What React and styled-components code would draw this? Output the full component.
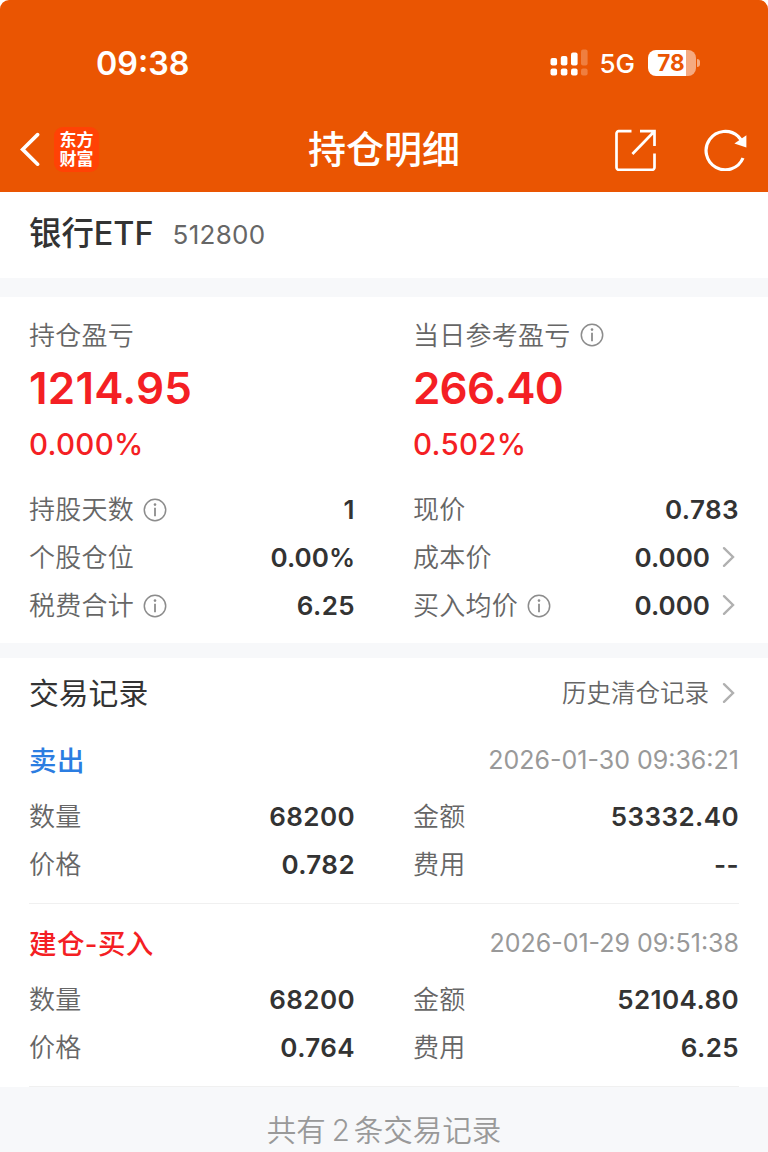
import styled, { createGlobalStyle } from "styled-components";

export default function App() {
  return (
    <>
      <GlobalStyle />
      <SPage>
        <SHeader>
          <SStatusBar>
            <STime>09:38</STime>
            <SStatusIcons>
              <SignalIcon />
              <SNetwork>5G</SNetwork>
              <SBattery>
                <span>78</span>
              </SBattery>
              <SBatteryTip />
            </SStatusIcons>
          </SStatusBar>
          <SNavBar>
            <SNavSide>
              <BackIcon />
              <SBrand>
                <span>东方</span>
                <span>财富</span>
              </SBrand>
            </SNavSide>
            <STitle>持仓明细</STitle>
            <SNavSide $end>
              <ShareIcon />
              <RefreshIcon />
            </SNavSide>
          </SNavBar>
        </SHeader>

        <SStock>
          <SStockName>银行ETF</SStockName>
          <SStockCode>512800</SStockCode>
        </SStock>

        <SSummary>
          <SColumns>
            {profits.map((p) => (
              <SProfit key={p.label}>
                <SLabel>
                  <span>{p.label}</span>
                  {p.info && <InfoIcon />}
                </SLabel>
                <SAmount $tracking={p.tracking}>{p.amount}</SAmount>
                <SPercent>{p.percent}</SPercent>
              </SProfit>
            ))}
          </SColumns>
          <SDetails>
            {details.map((d) => (
              <Field key={d.label} {...d} />
            ))}
          </SDetails>
        </SSummary>

        <SRecords>
          <SRecordsHead>
            <h2>交易记录</h2>
            <SHistory>
              <span>历史清仓记录</span>
              <ChevronIcon />
            </SHistory>
          </SRecordsHead>
          {trades.map((t) => (
            <STrade key={t.time}>
              <STradeHead>
                <STradeType $color={t.color}>{t.type}</STradeType>
                <STradeTime>{t.time}</STradeTime>
              </STradeHead>
              <SColumns>
                {t.fields.map((f) => (
                  <Field key={f.label} {...f} />
                ))}
              </SColumns>
            </STrade>
          ))}
        </SRecords>

        <SFooter>
          共有<b>2</b>条交易记录
        </SFooter>
      </SPage>
    </>
  );
}

const profits = [
  { label: "持仓盈亏", amount: "1214.95", percent: "0.000%", tracking: "0.2px" },
  {
    label: "当日参考盈亏",
    amount: "266.40",
    percent: "0.502%",
    info: true,
    tracking: "-0.8px",
  },
];

const details = [
  { label: "持股天数", value: "1", info: true },
  { label: "现价", value: "0.783" },
  { label: "个股仓位", value: "0.00%", tight: true },
  { label: "成本价", value: "0.000", link: true, tight: true },
  { label: "税费合计", value: "6.25", info: true },
  { label: "买入均价", value: "0.000", info: true, link: true, tight: true },
];

const trades = [
  {
    type: "卖出",
    color: "#2b7de1",
    time: "2026-01-30 09:36:21",
    fields: [
      { label: "数量", value: "68200" },
      { label: "金额", value: "53332.40" },
      { label: "价格", value: "0.782" },
      { label: "费用", value: "--" },
    ],
  },
  {
    type: "建仓-买入",
    color: "#f41f24",
    time: "2026-01-29 09:51:38",
    fields: [
      { label: "数量", value: "68200" },
      { label: "金额", value: "52104.80" },
      { label: "价格", value: "0.764" },
      { label: "费用", value: "6.25" },
    ],
  },
];

function Field({ label, value, info, link, tight }) {
  return (
    <SField>
      <SLabel>
        {label}
        {info && <InfoIcon />}
      </SLabel>
      <SValue $tight={tight}>
        <span>{value}</span>
        {link && <ChevronIcon />}
      </SValue>
    </SField>
  );
}

function SignalIcon() {
  return (
    <svg width="38" height="28" viewBox="0 0 38 28" fill="#fff">
      <rect x="0.5" y="9" width="6.6" height="7.6" rx="2" />
      <rect x="10.8" y="7" width="6.6" height="9.6" rx="2" />
      <rect x="21" y="3.6" width="6.6" height="13" rx="2" />
      <rect x="0.5" y="19.6" width="6.6" height="7" rx="2" />
      <rect x="10.8" y="19.6" width="6.6" height="7" rx="2" />
      <rect x="21" y="19.6" width="6.6" height="7" rx="2" />
      <g opacity="0.24">
        <rect x="31" y="0.6" width="6.6" height="16" rx="2" />
        <rect x="31" y="19.6" width="6.6" height="7" rx="2" />
      </g>
    </svg>
  );
}

function BackIcon() {
  return (
    <svg width="20" height="34" viewBox="0 0 20 34" fill="none">
      <path
        d="M17.6 2.6 2.6 17.4l15 14.8"
        stroke="#fff"
        strokeWidth="3.6"
        strokeLinecap="round"
      />
    </svg>
  );
}

function ShareIcon() {
  return (
    <svg width="42" height="42" viewBox="0 0 42 42" fill="none">
      <path
        d="M16.5 2.2H3.7a2.2 2.2 0 0 0-2.2 2.2v34.2a2.2 2.2 0 0 0 2.2 2.2h33.6a2.2 2.2 0 0 0 2.2-2.2V24.6M25 2.2h14.5v14.8M39 2.7 17.4 25"
        stroke="#fff"
        strokeWidth="2.7"
      />
    </svg>
  );
}

function RefreshIcon() {
  return (
    <svg width="44" height="42" viewBox="0 0 44 42" fill="none">
      <path
        d="M39 29A19.2 19.2 0 1 1 34.2 7.4L37.6 11.5"
        stroke="#fff"
        strokeWidth="3.2"
      />
      <path d="M42.4 6.2V18.4L30.4 14.4Z" fill="#fff" />
    </svg>
  );
}

function InfoIcon() {
  return (
    <svg width="24" height="24" viewBox="0 0 24 24" fill="none">
      <circle cx="12" cy="12" r="10.7" stroke="#8c8c8c" strokeWidth="1.5" />
      <path d="M12 9.7v8.6" stroke="#8c8c8c" strokeWidth="1.8" />
      <circle cx="12" cy="6.6" r="1.3" fill="#8c8c8c" />
    </svg>
  );
}

function ChevronIcon() {
  return (
    <svg width="14" height="22" viewBox="0 0 14 22" fill="none">
      <path
        d="M2 2.2 11 11l-9 8.8"
        stroke="#b0b0b0"
        strokeWidth="2.4"
        strokeLinecap="round"
      />
    </svg>
  );
}

const GlobalStyle = createGlobalStyle`
  * {
    box-sizing: border-box;
    margin: 0;
  }

  body {
    background: #fff;
    color: #333;
    font-family: Inter, "Noto Sans CJK SC", sans-serif;
  }

  svg {
    display: block;
    flex-shrink: 0;
  }
`;

const SPage = styled.div`
  display: flex;
  flex-direction: column;
  width: 768px;
  height: 1152px;
  overflow: hidden;
  background: #f7f8fa;
`;

const SHeader = styled.header`
  height: 192px;
  border-radius: 9px 9px 0 0;
  background: #ea5502;
  box-shadow: 0 -12px 0 12px #fff;
  clip-path: inset(0);
  color: #fff;
`;

const SStatusBar = styled.div`
  display: flex;
  justify-content: space-between;
  align-items: center;
  height: 108px;
  padding: 18px 68px 0 96px;
`;

const STime = styled.div`
  font-size: 32.3px;
  font-weight: 600;
`;

const SStatusIcons = styled.div`
  display: flex;
  align-items: center;
`;

const SNetwork = styled.span`
  margin-left: 11px;
  font-size: 26px;
  font-weight: 450;
`;

const SBattery = styled.div`
  display: flex;
  align-items: center;
  justify-content: center;
  width: 48px;
  height: 26px;
  margin-left: 13px;
  border-radius: 8px;
  background: linear-gradient(90deg, #fff 38px, #f5aa81 38px);
  color: #ea5502;
  font-size: 22.5px;
  font-weight: 700;

  span {
    margin-right: 2px;
    padding-bottom: 1px;
  }
`;

const SBatteryTip = styled.div`
  width: 3px;
  height: 8px;
  margin-left: 1px;
  border-radius: 0 4px 4px 0;
  background: #f5aa81;
`;

const SNavBar = styled.nav`
  display: flex;
  justify-content: space-between;
  align-items: center;
  height: 82px;
  padding: 0 20px;
`;

const SNavSide = styled.div`
  display: flex;
  align-items: center;
  justify-content: ${(p) => (p.$end ? "flex-end" : "flex-start")};
  gap: ${(p) => (p.$end ? "47px" : "14px")};
  width: 160px;
  padding-top: ${(p) => (p.$end ? "2px" : "0")};
`;

const SBrand = styled.div`
  display: flex;
  flex-direction: column;
  align-items: center;
  justify-content: center;
  width: 45px;
  height: 45px;
  padding-top: 2px;
  border-radius: 9px;
  background: #ff4205;
  font-size: 17px;
  font-weight: 700;
  line-height: 19px;
`;

const STitle = styled.h1`
  padding-bottom: 1px;
  font-size: 38px;
  font-weight: 500;
  line-height: 50px;
`;

const SStock = styled.section`
  display: flex;
  align-items: center;
  height: 86px;
  padding: 0 29px 2px;
  background: #fff;
`;

const SStockName = styled.h2`
  font-size: 32.4px;
  font-weight: 500;
  line-height: 84px;
`;

const SStockCode = styled.span`
  margin-left: 19px;
  color: #666;
  font-size: 26px;
  letter-spacing: 0.3px;
`;

const SSummary = styled.section`
  height: 346px;
  margin-top: 19px;
  padding: 18px 29px 0;
  background: #fff;
`;

const SColumns = styled.div`
  display: grid;
  grid-template-columns: 326px 326px;
  column-gap: 58px;
`;

const SDetails = styled(SColumns)`
  margin-top: 20px;
`;

const SProfit = styled.div`
  color: #f41f24;
`;

const SLabel = styled.div`
  display: flex;
  align-items: center;
  gap: 9px;
  height: 40px;
  color: #666;
  font-size: 26px;
  font-weight: 350;
  line-height: 40px;
  letter-spacing: 0.25px;

  span {
    padding-top: 2px;
  }
`;

const SAmount = styled.div`
  font-size: 44px;
  font-weight: 600;
  line-height: 66px;
  letter-spacing: ${(p) => p.$tracking};
`;

const SPercent = styled.div`
  padding-top: 1px;
  font-size: 29.5px;
  font-weight: 550;
  line-height: 44px;
  letter-spacing: 0.3px;
`;

const SField = styled.div`
  display: flex;
  justify-content: space-between;
  align-items: center;
  height: 48px;
`;

const SValue = styled.div`
  display: flex;
  align-items: center;
  gap: 12px;
  font-size: 26px;
  font-weight: 600;
  letter-spacing: ${(p) => (p.$tight ? "0" : "0.4px")};

  span {
    padding-bottom: 2px;
  }

  svg {
    margin: 0 3px 2px 0;
  }
`;

const SRecords = styled.section`
  margin-top: 15px;
  background: #fff;
`;

const SRecordsHead = styled.div`
  display: flex;
  justify-content: space-between;
  align-items: center;
  height: 63px;
  padding: 7px 32px 0 29px;

  h2 {
    padding-bottom: 4px;
    font-size: 29.8px;
    font-weight: 400;
  }
`;

const SHistory = styled.div`
  display: flex;
  align-items: center;
  gap: 13px;
  color: #666;
  font-size: 24.5px;
  font-weight: 350;

  span {
    padding-bottom: 3px;
  }
`;

const STrade = styled.article`
  height: 183px;
  margin: 0 29px;
  padding-top: 7px;
  border-bottom: 1px solid #f0f0f0;
`;

const STradeHead = styled.div`
  display: flex;
  justify-content: space-between;
  align-items: center;
  height: 65px;
  padding-bottom: 3px;
`;

const STradeType = styled.h3`
  padding-bottom: 1px;
  color: ${(p) => p.$color};
  font-size: 27.5px;
  font-weight: 500;
  letter-spacing: 0.4px;
`;

const STradeTime = styled.time`
  padding-top: 2px;
  color: #999;
  font-size: 25px;
`;

const SFooter = styled.footer`
  padding-top: 21px;
  color: #999;
  font-size: 29.5px;
  font-weight: 350;
  line-height: 44px;
  text-align: center;

  b {
    margin: 0 4px 0 6px;
    font-weight: 350;
  }
`;
